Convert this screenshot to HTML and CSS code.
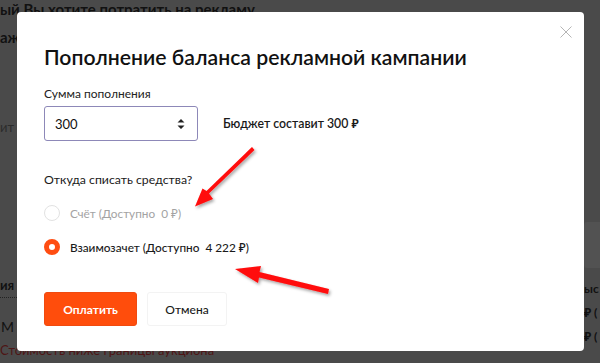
FILE: index.html
```html
<!DOCTYPE html>
<html lang="ru">
<head>
<meta charset="utf-8">
<link rel="stylesheet" href="styles.css">
</head>
<body>
<div class="page">
  <div class="bg-left">
    <div class="bg-head">ый Вы хотите потратить на рекламу</div>
    <div class="bg-head2">аж</div>
    <div class="bg-muted">ит</div>
    <div class="bg-tab">ия</div>
    <div class="bg-m">М</div>
    <div class="bg-red">Стоимость ниже границы аукциона</div>
  </div>
  <div class="bg-right">
    <div class="bg-box"></div>
    <div class="bg-r1">ыс</div>
    <div class="bg-r2">₽ (</div>
    <div class="bg-r3">₽ (</div>
  </div>
</div>

<div class="modal">
  <button class="close" aria-label="Закрыть">
    <svg width="12" height="12" viewBox="0 0 12 12"><path d="M0.5 0.5 L11.5 11.5 M11.5 0.5 L0.5 11.5" stroke="#b5b5b5" stroke-width="1" fill="none"/></svg>
  </button>
  <h1 class="title">Пополнение баланса рекламной кампании</h1>
  <div class="label">Сумма пополнения</div>
  <div class="amount-row">
    <div class="input">
      <span>300</span>
      <svg class="spin" width="8" height="12" viewBox="0 0 8 12"><path d="M0.5 4.5 L4 1 L7.5 4.5 Z M0.5 7.5 L4 11 L7.5 7.5 Z" fill="#222"/></svg>
    </div>
    <div class="budget">Бюджет составит 300 ₽</div>
  </div>
  <div class="question">Откуда списать средства?</div>
  <div class="radios">
    <div class="radio disabled"><span class="dot"></span><span>Счёт (Доступно&nbsp; 0 ₽)</span></div>
    <div class="radio"><span class="dot on"></span><span>Взаимозачет (Доступно&nbsp; 4 222 ₽)</span></div>
  </div>
  <div class="actions">
    <button class="btn primary">Оплатить</button>
    <button class="btn ghost">Отмена</button>
  </div>
</div>

<svg class="arrows" width="600" height="363" viewBox="0 0 600 363">
  <defs>
    <filter id="sh" x="-20%" y="-20%" width="140%" height="140%">
      <feDropShadow dx="1.5" dy="2" stdDeviation="1.5" flood-color="#000" flood-opacity="0.35"/>
    </filter>
  </defs>
  <g filter="url(#sh)" fill="#ff0a0a" stroke="none">
    <path d="M252 147 L254.5 150 L209 193.5 L213 199 L195 206.5 L202.5 188.5 L206.5 191 Z"/>
    <path d="M329 289 L328 294 L259 277.5 L258 283 L235 269 L261 266 L259.5 272 Z"/>
  </g>
</svg>
</body>
</html>
```
FILE: styles.css
```css
* { box-sizing: border-box; }
html, body { margin: 0; padding: 0; }
body {
  width: 600px;
  height: 363px;
  overflow: hidden;
  background: #4a4a4a;
  font-family: Lato, "Noto Sans", sans-serif;
  position: relative;
}
.page {
  display: flex;
  justify-content: space-between;
  height: 363px;
}
.bg-left {
  width: 260px;
  font-size: 13px;
  color: #111;
}
.bg-head {
  font-weight: 700;
  font-size: 15px;
  line-height: 18px;
  white-space: nowrap;
}
.bg-head2 {
  font-weight: 700;
  font-size: 15px;
  line-height: 18px;
  margin-top: 10px;
}
.bg-muted {
  color: #2c2c2c;
  margin-top: 73px;
  line-height: 16px;
}
.bg-tab {
  font-weight: 700;
  margin-top: 142px;
  line-height: 16px;
  width: 17px;
  padding-bottom: 4px;
  border-bottom: 1px dotted #222;
}
.bg-m {
  margin-top: 21px;
  font-size: 14px;
  line-height: 16px;
  padding-left: 1px;
}
.bg-red {
  color: #4e1515;
  margin-top: 7px;
  line-height: 16px;
  white-space: nowrap;
}
.bg-right {
  width: 16px;
  font-size: 12px;
  font-weight: 700;
  color: #111;
  overflow: hidden;
}
.bg-box {
  margin-top: 222px;
  height: 46px;
  background: #525252;
  border-radius: 3px 0 0 3px;
}
.bg-r1, .bg-r2, .bg-r3 {
  white-space: nowrap;
  line-height: 16px;
}
.bg-r1 { margin-top: 13px; }
.bg-r2 { margin-top: 8px; }
.bg-r3 { margin-top: 8px; }

.modal {
  position: absolute;
  left: 17px;
  top: 12px;
  width: 567px;
  height: 339px;
  background: #fff;
  border-radius: 4px;
  padding: 31px 27px 0;
  color: #1a1a1a;
}
.close {
  position: absolute;
  right: 12px;
  top: 14px;
  width: 12px;
  height: 12px;
  padding: 0;
  border: 0;
  background: none;
  display: block;
}
.close svg { display: block; }
.title {
  margin: 0;
  font-size: 21.2px;
  line-height: 28px;
  font-weight: 600;
  color: #111;
}
.label {
  margin-top: 15px;
  font-size: 12px;
  line-height: 16px;
  color: #222;
}
.amount-row {
  margin-top: 4px;
  display: flex;
  align-items: center;
  gap: 25px;
}
.input {
  width: 154px;
  height: 35px;
  border: 1px solid #8d88b8;
  border-radius: 3px;
  display: flex;
  align-items: center;
  justify-content: space-between;
  padding: 0 12px 0 10px;
  font-size: 13px;
  color: #111;
}
.spin { display: block; }
.budget {
  font-size: 12.3px;
  font-weight: 600;
  color: #1a1a1a;
}
.question {
  margin-top: 30px;
  font-size: 12.3px;
  line-height: 18px;
  color: #1a1a1a;
}
.radios {
  margin-top: 14px;
  display: flex;
  flex-direction: column;
  gap: 14px;
}
.radio {
  display: flex;
  align-items: center;
  gap: 10px;
  height: 20px;
  font-size: 11.8px;
  font-weight: 500;
  color: #1a1a1a;
}
.radio.disabled { color: #a3a3a3; font-weight: 400; }
.dot {
  width: 16px;
  height: 16px;
  border-radius: 50%;
  border: 1px solid #e2e2e2;
  background: #fff;
  flex: none;
}
.dot.on {
  border: 5px solid #ff4d12;
}
.actions {
  margin-top: 35px;
  display: flex;
  gap: 10px;
}
.btn {
  height: 34px;
  font-family: inherit;
  font-size: 12px;
  border-radius: 3px;
  padding: 0;
  cursor: pointer;
}
.btn.primary {
  width: 93px;
  background: #ff4d0c;
  border: 1px solid #f04a10;
  color: #fff;
  font-weight: 700;
}
.btn.ghost {
  width: 80px;
  background: #fff;
  border: 1px solid #f3f3f3;
  color: #1a1a1a;
  font-weight: 500;
}
.arrows {
  position: absolute;
  left: 0;
  top: 0;
  pointer-events: none;
}
```
